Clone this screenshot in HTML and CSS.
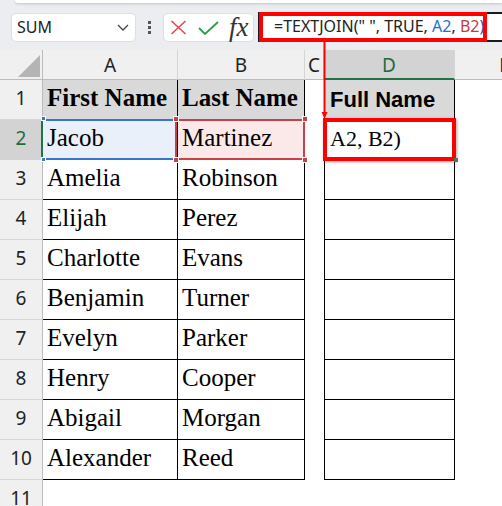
FILE: index.html
```html
<!DOCTYPE html>
<html lang="en">
<head>
<meta charset="UTF-8">
<title>TEXTJOIN</title>
<link rel="stylesheet" href="styles.css">
</head>
<body>
<header class="top">
	<div class="ribbon"></div>
	<div class="toolbar">
		<div class="namebox">
			<span>SUM</span>
			<svg class="chev" width="12" height="7" viewBox="0 0 12 7"><path d="M1 1l5 5 5-5" fill="none" stroke="#444" stroke-width="1.3"/></svg>
		</div>
		<div class="dots"><i></i><i></i><i></i></div>
		<div class="fxbox">
			<svg width="17" height="15" viewBox="0 0 17 15"><path d="M1.5 1l14 13M15.5 1l-14 13" stroke="#e5484d" stroke-width="1.6" fill="none"/></svg>
			<svg class="ok" width="21" height="14" viewBox="0 0 21 14"><path d="M1 7l6 6L20 1" stroke="#2d9a4c" stroke-width="1.8" fill="none"/></svg>
			<span class="fx">fx</span>
		</div>
		<div class="formula"><span class="mark"></span>=TEXTJOIN(" ", TRUE, <span class="refa">A2</span>, <span class="refb">B2</span><span class="paren">)</span></div>
	</div>
</header>
<section class="sheet">
	<div class="corner"><span class="tri"></span></div>
	<div class="colh">A</div>
	<div class="colh">B</div>
	<div class="colh">C</div>
	<div class="colh cur">D</div>
	<div class="colh">E</div>

	<div class="rowh">1</div>
	<div class="cell head">First Name</div>
	<div class="cell head">Last Name</div>
	<div></div>
	<div class="dcell head">Full Name</div>
	<div></div>

	<div class="rowh cur">2</div>
	<div class="cell selA">Jacob<i class="h b1"></i><i class="h b2"></i></div>
	<div class="cell selB">Martinez<i class="h r1"></i><i class="h r2"></i><i class="h r3"></i><i class="h r4"></i></div>
	<div></div>
	<div class="dcell edit">A2, B2)</div>
	<div></div>

	<div class="rowh">3</div>
	<div class="cell">Amelia</div>
	<div class="cell">Robinson</div>
	<div></div>
	<div class="dcell"></div>
	<div></div>

	<div class="rowh">4</div>
	<div class="cell">Elijah</div>
	<div class="cell">Perez</div>
	<div></div>
	<div class="dcell"></div>
	<div></div>

	<div class="rowh">5</div>
	<div class="cell">Charlotte</div>
	<div class="cell">Evans</div>
	<div></div>
	<div class="dcell"></div>
	<div></div>

	<div class="rowh">6</div>
	<div class="cell">Benjamin</div>
	<div class="cell">Turner</div>
	<div></div>
	<div class="dcell"></div>
	<div></div>

	<div class="rowh">7</div>
	<div class="cell">Evelyn</div>
	<div class="cell">Parker</div>
	<div></div>
	<div class="dcell"></div>
	<div></div>

	<div class="rowh">8</div>
	<div class="cell">Henry</div>
	<div class="cell">Cooper</div>
	<div></div>
	<div class="dcell"></div>
	<div></div>

	<div class="rowh">9</div>
	<div class="cell">Abigail</div>
	<div class="cell">Morgan</div>
	<div></div>
	<div class="dcell"></div>
	<div></div>

	<div class="rowh">10</div>
	<div class="cell">Alexander</div>
	<div class="cell">Reed</div>
	<div></div>
	<div class="dcell"></div>
	<div></div>

	<div class="rowh">11</div>
</section>
<!-- 标注箭头 -->
<svg class="arrow" width="12" height="78" viewBox="0 0 12 78"><path d="M6.5 0v71" stroke="#f00" stroke-width="2"/><path d="M3.5 70h6l-3 7z" fill="#f00"/></svg>
</body>
</html>
```
FILE: styles.css
```css
body {
	margin: 0;
	width: 502px;
	height: 506px;
	overflow: hidden;
	position: relative;
	background: #fff;
	font-family: "Noto Sans", sans-serif;
}
.top {
	height: 50px;
	background: #ebedf0;
	overflow: hidden;
}
.ribbon {
	height: 3px;
	margin-left: 15px;
	background: #fff;
	border-bottom-left-radius: 6px;
	box-shadow: 0 1px 3px rgba(0,0,0,.18);
}
.toolbar {
	display: flex;
	align-items: flex-start;
	padding: 9px 0 0 11px;
}
.namebox {
	display: flex;
	align-items: center;
	justify-content: space-between;
	box-sizing: border-box;
	width: 125px;
	height: 29px;
	margin-top: 1px;
	padding: 0 6px 0 5px;
	border: 1px solid #dedede;
	border-radius: 5px;
	background: #fff;
	font: 16px/27px "Noto Sans", sans-serif;
	color: #222;
}
.dots {
	display: flex;
	flex-direction: column;
	align-items: center;
	justify-content: center;
	gap: 2px;
	width: 27px;
	height: 29px;
	margin-top: 1px;
}
.dots i {
	width: 3px;
	height: 3px;
	background: #555;
}
.fxbox {
	display: flex;
	align-items: center;
	box-sizing: border-box;
	width: 91px;
	height: 29px;
	margin-top: 1px;
	padding-left: 6px;
	border: 1px solid #dedede;
	border-radius: 5px;
	background: #fff;
}
.fxbox .ok {
	margin-left: 11px;
}
.fx {
	margin-left: 10px;
	font: italic 27px/27px "Liberation Serif", serif;
	color: #333;
}
.formula {
	position: relative;
	flex: 1;
	box-sizing: border-box;
	height: 30px;
	margin-left: 4px;
	padding-left: 14px;
	border: 2px solid #1b1b1b;
	border-right: 0;
	background: #fff;
	font: 16px/24px "Noto Sans", sans-serif;
	color: #222;
	white-space: nowrap;
}
.mark {
	position: absolute;
	left: -1px;
	top: -2px;
	box-sizing: border-box;
	width: 228px;
	height: 30px;
	border: 4px solid #f00;
}
.refa {
	color: #1f6fd0;
}
.refb {
	color: #c43b3b;
}
.paren {
	color: #3b46b0;
}

.sheet {
	display: grid;
	grid-template-columns: 43px 135px 127px 19px 131px 100px;
	grid-template-rows: 30px repeat(11, 40px);
}
.corner,
.colh {
	box-sizing: border-box;
	background: #f0f0f0;
	border-right: 1px solid #d5d5d5;
	border-bottom: 1px solid #bcbcbc;
}
.corner {
	display: flex;
	justify-content: flex-end;
	align-items: flex-end;
	padding: 0 2px 2px 0;
	border-right-color: #bcbcbc;
}
.tri {
	width: 0;
	height: 0;
	border-left: 22px solid transparent;
	border-bottom: 22px solid #b4b4b4;
}
.colh {
	text-align: center;
	font: 19px/31px "Noto Sans", sans-serif;
	color: #222;
}
.colh.cur {
	background: #d3d3d3;
	color: #1d6b3f;
	border-bottom: 2px solid #217346;
}
.rowh {
	box-sizing: border-box;
	background: #f0f0f0;
	border-right: 1px solid #bcbcbc;
	border-bottom: 1px solid #d5d5d5;
	text-align: center;
	font: 19px/37px "Noto Sans", sans-serif;
	color: #222;
}
.rowh.cur {
	background: #d3d3d3;
	color: #1d6b3f;
	border-right-color: #217346;
	box-shadow: inset -1px 0 0 #217346;
}
.cell {
	box-sizing: border-box;
	padding-left: 4px;
	border-right: 1px solid #000;
	border-bottom: 1px solid #000;
	font: 25px/36px "Liberation Serif", serif;
	color: #000;
	white-space: nowrap;
}
.cell.head {
	background: #d9d9d9;
	font-weight: bold;
}
.dcell {
	box-sizing: border-box;
	padding-left: 5px;
	border: 1px solid #000;
	border-top: 0;
	white-space: nowrap;
}
.dcell.head {
	padding-top: 2px;
	background: #d9d9d9;
	font: bold 22px/35px "Liberation Sans", sans-serif;
}
.dcell.edit {
	position: relative;
	padding-top: 1px;
	font: 22px/35px "Liberation Serif", serif;
}
.dcell.edit::after {
	content: "";
	position: absolute;
	left: -2px;
	right: -2px;
	top: -2px;
	bottom: -2px;
	border: 4px solid #f00;
	box-shadow: 1px 1px 3px rgba(0,0,0,.35);
}
.dcell.edit::before {
	content: "";
	position: absolute;
	right: -4px;
	bottom: -3px;
	z-index: 1;
	width: 4px;
	height: 4px;
	background: #58705e;
}

/* 选区 */
.selA,
.selB {
	position: relative;
}
.selA {
	background: #eaf0f9;
}
.selB {
	background: #fbe9ea;
}
.selA::after {
	content: "";
	position: absolute;
	left: 0;
	right: -1px;
	top: -1px;
	bottom: -1px;
	border-top: 2px solid #3a74c7;
	border-bottom: 2px solid #3a74c7;
}
.selB::after {
	content: "";
	position: absolute;
	left: -3px;
	right: -1px;
	top: -1px;
	bottom: -1px;
	border: 2px solid #c8404a;
}
.h {
	position: absolute;
	z-index: 1;
	width: 4px;
	height: 4px;
	border: 1px solid #fff;
}
.b1,
.b2 {
	left: -2px;
	width: 3px;
	height: 3px;
	background: #3a74c7;
}
.b1 {
	top: -4px;
}
.b2 {
	bottom: -3px;
}
.r1,
.r2,
.r3,
.r4 {
	background: #c8404a;
}
.r1 {
	left: -5px;
	top: -4px;
}
.r2 {
	left: -5px;
	bottom: -4px;
}
.r3 {
	right: -4px;
	top: -4px;
}
.r4 {
	right: -4px;
	bottom: -4px;
}
.arrow {
	position: absolute;
	left: 318px;
	top: 42px;
}
```
